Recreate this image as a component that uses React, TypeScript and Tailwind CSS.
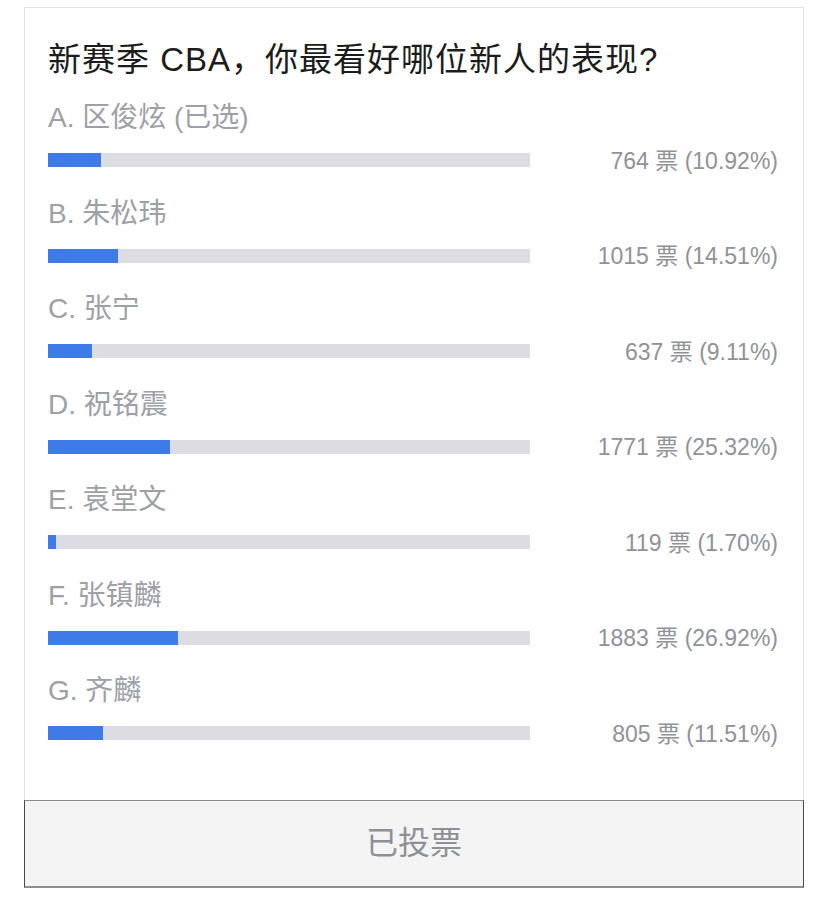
const options = [
  { label: "A. 区俊炫 (已选)", votes: 764, pct: 10.92 },
  { label: "B. 朱松玮", votes: 1015, pct: 14.51 },
  { label: "C. 张宁", votes: 637, pct: 9.11 },
  { label: "D. 祝铭震", votes: 1771, pct: 25.32 },
  { label: "E. 袁堂文", votes: 119, pct: 1.7 },
  { label: "F. 张镇麟", votes: 1883, pct: 26.92 },
  { label: "G. 齐麟", votes: 805, pct: 11.51 },
];

const font = {
  fontFamily: '"Liberation Sans", "Noto Sans CJK SC", sans-serif',
};

export default function App() {
  return (
    <div className="min-h-[913px] w-[828px] bg-white pt-[7px]" style={font}>
      <div className="ml-[24px] w-[780px]">
        <div className="border-x border-t border-[#e3e3e3] pl-[23px] pr-[25px] pt-[32px] pb-[33px]">
          <h1 className="h-[40px] text-[33px] leading-[40px] tracking-[1px] text-[#1c1c1c]">
            新赛季 CBA，你最看好哪位新人的表现?
          </h1>
          <div className="mt-[18px]">
            {options.map((o) => (
              <div key={o.label} className="mb-[11.5px]">
                <div className="h-[40px] text-[28px] leading-[40px] text-[#9da0a6]">
                  {o.label}
                </div>
                <div className="flex h-[44px] items-center">
                  <div className="h-[14px] w-[482px] bg-[#dcdde3]">
                    <div
                      className="h-full bg-[#3e7be9]"
                      style={{ width: `${o.pct}%` }}
                    />
                  </div>
                  <div className="flex-1 pt-[2px] text-right text-[23px] text-[#8f9299]">
                    {o.votes} 票 ({o.pct.toFixed(2)}%)
                  </div>
                </div>
              </div>
            ))}
          </div>
        </div>
        <button className="flex h-[88px] w-full items-center justify-center border-x border-t border-b-2 border-x-[#4a4a4a] border-t-[#8a8a8a] border-b-[#8f8f8f] bg-[#f4f4f4] text-[32px] text-[#8e9097]">
          已投票
        </button>
      </div>
    </div>
  );
}
